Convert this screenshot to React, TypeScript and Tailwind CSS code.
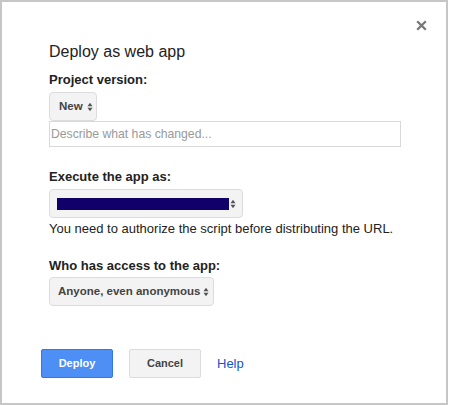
import React from "react";

function Arrows() {
  return (
    <svg width="6" height="10" viewBox="0 0 6 10" className="shrink-0">
      <path d="M3 0.8 L5.5 4.2 L0.5 4.2 Z" fill="#555" />
      <path d="M3 9.2 L5.5 5.8 L0.5 5.8 Z" fill="#555" />
    </svg>
  );
}

export default function App() {
  return (
    <div
      className="relative w-[448px] h-[405px] border-2 border-[#c6c6c6] bg-white text-[#222]"
      style={{ fontFamily: '"Liberation Sans", Arial, sans-serif' }}
    >
      <button className="absolute right-[19px] top-[18px] p-0" aria-label="Close">
        <svg width="11" height="11" viewBox="0 0 11 11" className="block">
          <path d="M1.2 1.2 L9.8 9.8 M9.8 1.2 L1.2 9.8" stroke="#777" strokeWidth="2.3" />
        </svg>
      </button>
      <div className="flex flex-col pl-[47px] pt-[40px]">
        <div className="text-[16px] leading-[20px] text-[#222]">Deploy as web app</div>
        <div className="mt-[10px] text-[13px] leading-[16px] font-bold text-[#222]">Project version:</div>
        <div className="mt-[4px] flex h-[29px] w-[48px] items-center rounded-[4px] border border-[#dcdcdc] bg-[#f3f3f3] pl-[9px] text-[11.5px] font-bold text-[#444] whitespace-nowrap">
          <span>New</span>
          <span className="ml-[4px] flex"><Arrows /></span>
        </div>
        <div className="flex h-[26px] w-[352px] items-center border border-[#d9d9d9] bg-white px-[1px] text-[12.2px] text-[#999] whitespace-nowrap">
          Describe what has changed...
        </div>
        <div className="mt-[22px] text-[13px] leading-[16px] font-bold text-[#222]">Execute the app as:</div>
        <div className="mt-[4px] flex h-[29px] w-[194px] items-center justify-between rounded-[4px] border border-[#dcdcdc] bg-[#f3f3f3] pl-[7px] pr-[6px]">
          <div className="h-[12px] w-[172px] bg-[#100068]" />
          <Arrows />
        </div>
        <div className="mt-[3px] text-[13px] leading-[16px] text-[#222] whitespace-nowrap">
          You need to authorize the script before distributing the URL.
        </div>
        <div className="mt-[21px] text-[13px] leading-[16px] font-bold text-[#222]">Who has access to the app:</div>
        <div className="mt-[3px] flex h-[29px] w-[165px] items-center justify-between rounded-[4px] border border-[#dcdcdc] bg-[#f3f3f3] pl-[8px] pr-[4px] text-[11.5px] font-bold text-[#444] whitespace-nowrap">
          <span>Anyone, even anonymous</span>
          <Arrows />
        </div>
        <div className="mt-[43px] ml-[-8px] flex items-center">
          <button className="h-[29px] w-[72px] rounded-[2px] border border-[#3079ed] bg-[#4d8ff5] text-[11px] font-bold text-white">
            Deploy
          </button>
          <button className="ml-[16px] h-[29px] w-[72px] rounded-[2px] border border-[#dcdcdc] bg-[#f3f3f3] text-[11px] font-bold text-[#444]">
            Cancel
          </button>
          <span className="ml-[16px] text-[13px] text-[#1155cc]">Help</span>
        </div>
      </div>
    </div>
  );
}
